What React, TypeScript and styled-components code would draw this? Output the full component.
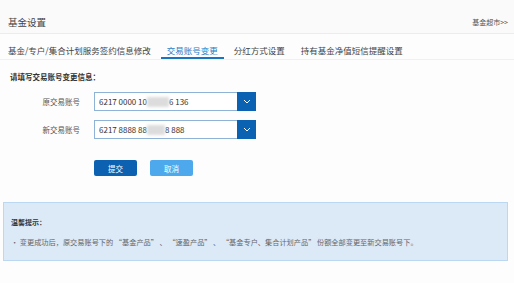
import React from "react";
import styled, { createGlobalStyle } from "styled-components";

const GlobalStyle = createGlobalStyle`
  html, body {
    margin: 0;
    padding: 0;
    background: #fdfdfd;
    font-family: "Noto Sans CJK SC", "Noto Sans", sans-serif;
  }
`;

const Page = styled.div`
  width: 514px;
  height: 283px;
  overflow: hidden;
  background: #fdfdfd;
`;

const Header = styled.div`
  display: flex;
  align-items: center;
  justify-content: space-between;
  height: 23px;
  padding: 10px 6px 0 8px;
  background: #fafafa;
  border-bottom: 1px solid #ececec;
`;

const Title = styled.div`
  font-size: 9.5px;
  color: #444;
`;

const MoreLink = styled.a`
  font-size: 7px;
  color: #555;
  text-decoration: none;
`;

const Tabs = styled.div`
  display: flex;
  align-items: flex-end;
  gap: 4px;
  height: 25px;
  padding-left: 2px;
  border-bottom: 1px solid #f0f0f0;
`;

const Tab = styled.div<{ $active?: boolean }>`
  padding: 0 6px 1px;
  font-size: 8.5px;
  line-height: 12px;
  white-space: nowrap;
  color: ${({ $active }) => ($active ? "#2a7bc4" : "#444")};
  border-bottom: 2px solid ${({ $active }) => ($active ? "#1b74c0" : "transparent")};
`;

const Form = styled.div`
  padding: 11px 0 0 10px;
`;

const FormTitle = styled.div`
  font-size: 7.5px;
  font-weight: bold;
  color: #333;
  line-height: 12px;
`;

const Rows = styled.div`
  display: flex;
  flex-direction: column;
  gap: 9px;
  margin-top: 9px;
`;

const Row = styled.div`
  display: flex;
  align-items: center;
`;

const Label = styled.div`
  width: 70px;
  text-align: right;
  font-size: 7.5px;
  color: #555;
`;

const Select = styled.div`
  display: flex;
  margin-left: 14px;
  width: 162px;
  height: 19px;
  box-sizing: border-box;
  border: 1px solid #8fb3d6;
  background: #fff;
`;

const Value = styled.div`
  flex: 1;
  display: flex;
  align-items: center;
  padding-left: 4px;
  font-size: 8px;
  color: #333;
  white-space: pre;
`;

const Blur = styled.span<{ $w: number }>`
  display: inline-block;
  width: ${({ $w }) => $w}px;
  height: 10px;
  background: #dcdcdc;
  filter: blur(1.5px);
`;

const Arrow = styled.div`
  width: 19px;
  margin: -1px -1px -1px 0;
  background: #0c62b2;
  display: flex;
  align-items: center;
  justify-content: center;
`;

const Buttons = styled.div`
  display: flex;
  gap: 13px;
  margin: 21px 0 0 84px;
`;

const Button = styled.button<{ $primary?: boolean }>`
  width: 43px;
  height: 16px;
  padding: 0;
  border: none;
  border-radius: 2px;
  font-family: inherit;
  font-size: 7.5px;
  color: #fff;
  background: ${({ $primary }) => ($primary ? "#0c62b0" : "#4ea9ec")};
`;

const Tip = styled.div`
  margin: 26px 6px 0 3px;
  height: 59px;
  box-sizing: border-box;
  padding: 14px 7px 0;
  background: #dce9f7;
  border: 1px solid #bcd7f1;
`;

const TipTitle = styled.div`
  font-size: 7px;
  color: #333;
  font-weight: bold;
  line-height: 10px;
`;

const TipText = styled.div`
  margin-top: 10px;
  font-size: 7.2px;
  color: #666;
  line-height: 10px;
  white-space: nowrap;
`;

const Chevron = () => (
  <svg width="8" height="5" viewBox="0 0 8 5">
    <path d="M1 1 L4 4 L7 1" fill="none" stroke="#fff" strokeWidth="1" />
  </svg>
);

export default function App() {
  return (
    <Page>
      <GlobalStyle />
      <Header>
        <Title>基金设置</Title>
        <MoreLink href="#">基金超市&gt;&gt;</MoreLink>
      </Header>
      <Tabs>
        <Tab>基金/专户/集合计划服务签约信息修改</Tab>
        <Tab $active>交易账号变更</Tab>
        <Tab>分红方式设置</Tab>
        <Tab>持有基金净值短信提醒设置</Tab>
      </Tabs>
      <Form>
        <FormTitle>请填写交易账号变更信息：</FormTitle>
        <Rows>
          <Row>
            <Label>原交易账号</Label>
            <Select>
              <Value>
                6217 0000 10
                <Blur $w={22} />
                6 136
              </Value>
              <Arrow>
                <Chevron />
              </Arrow>
            </Select>
          </Row>
          <Row>
            <Label>新交易账号</Label>
            <Select>
              <Value>
                6217 8888 88
                <Blur $w={18} />
                8 888
              </Value>
              <Arrow>
                <Chevron />
              </Arrow>
            </Select>
          </Row>
        </Rows>
        <Buttons>
          <Button $primary>提交</Button>
          <Button>取消</Button>
        </Buttons>
      </Form>
      <Tip>
        <TipTitle>温馨提示：</TipTitle>
        <TipText>
          · 变更成功后，原交易账号下的 “基金产品” 、 “速盈产品” 、 “基金专户、集合计划产品” 份额全部变更至新交易账号下。
        </TipText>
      </Tip>
    </Page>
  );
}
